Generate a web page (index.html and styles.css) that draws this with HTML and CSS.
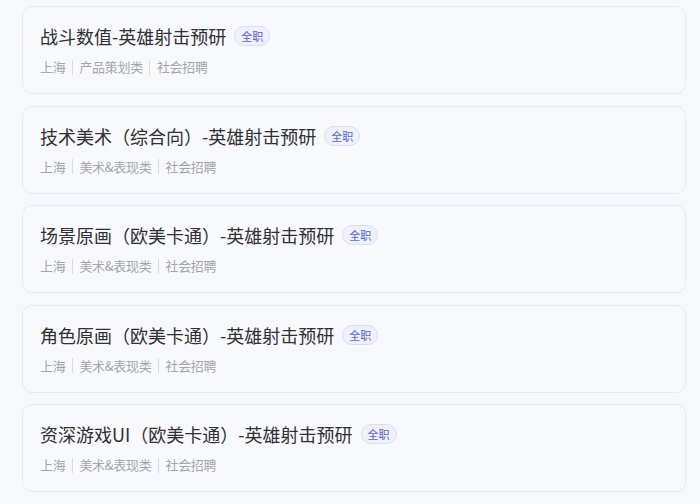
FILE: index.html
```html
<!DOCTYPE html>
<html lang="zh">
<head>
<meta charset="utf-8">
<link rel="stylesheet" href="styles.css">
</head>
<body>
<div class="list">
  <div class="card">
    <div class="title-row"><span class="title">战斗数值-英雄射击预研</span><span class="tag">全职</span></div>
    <div class="meta"><span>上海</span><i class="sep"></i><span>产品策划类</span><i class="sep"></i><span>社会招聘</span></div>
  </div>
  <div class="card">
    <div class="title-row"><span class="title">技术美术（综合向）-英雄射击预研</span><span class="tag">全职</span></div>
    <div class="meta"><span>上海</span><i class="sep"></i><span>美术&amp;表现类</span><i class="sep"></i><span>社会招聘</span></div>
  </div>
  <div class="card">
    <div class="title-row"><span class="title">场景原画（欧美卡通）-英雄射击预研</span><span class="tag">全职</span></div>
    <div class="meta"><span>上海</span><i class="sep"></i><span>美术&amp;表现类</span><i class="sep"></i><span>社会招聘</span></div>
  </div>
  <div class="card">
    <div class="title-row"><span class="title">角色原画（欧美卡通）-英雄射击预研</span><span class="tag">全职</span></div>
    <div class="meta"><span>上海</span><i class="sep"></i><span>美术&amp;表现类</span><i class="sep"></i><span>社会招聘</span></div>
  </div>
  <div class="card">
    <div class="title-row"><span class="title">资深游戏UI（欧美卡通）-英雄射击预研</span><span class="tag">全职</span></div>
    <div class="meta"><span>上海</span><i class="sep"></i><span>美术&amp;表现类</span><i class="sep"></i><span>社会招聘</span></div>
  </div>
</div>
</body>
</html>
```
FILE: styles.css
```css
html, body {
  margin: 0;
  padding: 0;
  background: #f6f8fb;
  font-family: "Noto Sans CJK SC", "Noto Sans", sans-serif;
}
.list {
  display: flex;
  flex-direction: column;
  gap: 11.5px;
  padding: 6px 14px 0 22px;
}
.card {
  height: 88px;
  box-sizing: border-box;
  border: 1px solid #e6e9ef;
  border-radius: 10px;
  background: #f8f9fc;
  padding: 15px 17px 0 17px;
}
.title-row {
  display: flex;
  align-items: center;
  gap: 8px;
  height: 28px;
}
.title {
  font-size: 18px;
  color: #2f3033;
  line-height: 28px;
}
.tag {
  font-size: 11px;
  color: #5a66cf;
  background: #eef0fb;
  border: 1px solid #d9ddf5;
  border-radius: 10px;
  padding: 0 6px;
  line-height: 18px;
}
.meta {
  display: flex;
  align-items: center;
  margin-top: 7px;
  font-size: 13px;
  color: #a4a6ab;
  line-height: 20px;
  letter-spacing: -0.3px;
}
.sep {
  display: inline-block;
  width: 1px;
  height: 15px;
  background: #d8dade;
  margin: 0 6.5px;
}
```
